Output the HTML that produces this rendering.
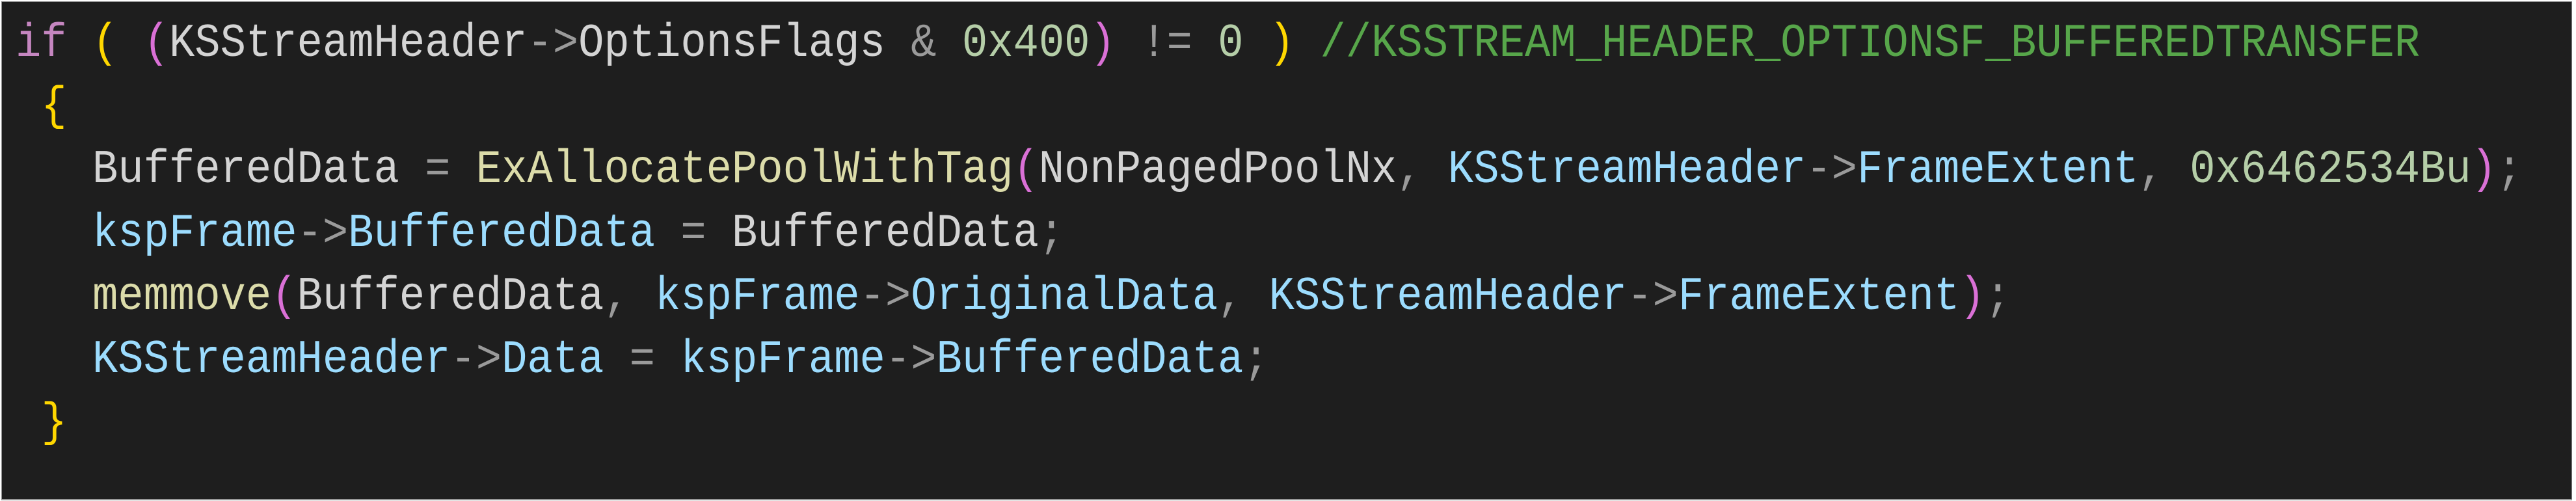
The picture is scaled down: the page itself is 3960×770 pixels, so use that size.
<!DOCTYPE html>
<html><head><meta charset="utf-8"><style>
html,body{margin:0;padding:0;}
body{width:3960px;height:770px;background:#fff;position:relative;overflow:hidden;}
.box{position:absolute;left:2px;top:2px;width:3950px;height:764px;background:#1e1e1e;border:1px solid #8a8a8a;border-bottom:2px solid #9a9a9a;}
pre{position:absolute;left:24px;top:19px;margin:0;font-family:"Liberation Mono",monospace;font-size:72px;line-height:97.2px;color:#d4d4d4;white-space:pre;transform:scaleX(0.91);transform-origin:0 0;}
.k{color:#c586c0}.y{color:#ffd700}.p{color:#da70d6}.g{color:#9a9a9a}.n{color:#b5cea8}.c{color:#57a64a}.f{color:#dcdcaa}.b{color:#9cdcfe}
</style></head><body><div class="box"></div>
<pre><span class="k">if</span> <span class="y">(</span> <span class="p">(</span>KSStreamHeader<span class="g">-&gt;</span>OptionsFlags <span class="g">&amp;</span> <span class="n">0x400</span><span class="p">)</span> <span class="g">!=</span> <span class="n">0</span> <span class="y">)</span> <span class="c">//KSSTREAM_HEADER_OPTIONSF_BUFFEREDTRANSFER</span>
 <span class="y">{</span>
   BufferedData <span class="g">=</span> <span class="f">ExAllocatePoolWithTag</span><span class="p">(</span>NonPagedPoolNx<span class="g">,</span> <span class="b">KSStreamHeader</span><span class="g">-&gt;</span><span class="b">FrameExtent</span><span class="g">,</span> <span class="n">0x6462534Bu</span><span class="p">)</span><span class="g">;</span>
   <span class="b">kspFrame</span><span class="g">-&gt;</span><span class="b">BufferedData</span> <span class="g">=</span> BufferedData<span class="g">;</span>
   <span class="f">memmove</span><span class="p">(</span>BufferedData<span class="g">,</span> <span class="b">kspFrame</span><span class="g">-&gt;</span><span class="b">OriginalData</span><span class="g">,</span> <span class="b">KSStreamHeader</span><span class="g">-&gt;</span><span class="b">FrameExtent</span><span class="p">)</span><span class="g">;</span>
   <span class="b">KSStreamHeader</span><span class="g">-&gt;</span><span class="b">Data</span> <span class="g">=</span> <span class="b">kspFrame</span><span class="g">-&gt;</span><span class="b">BufferedData</span><span class="g">;</span>
 <span class="y">}</span></pre>
</body></html>
